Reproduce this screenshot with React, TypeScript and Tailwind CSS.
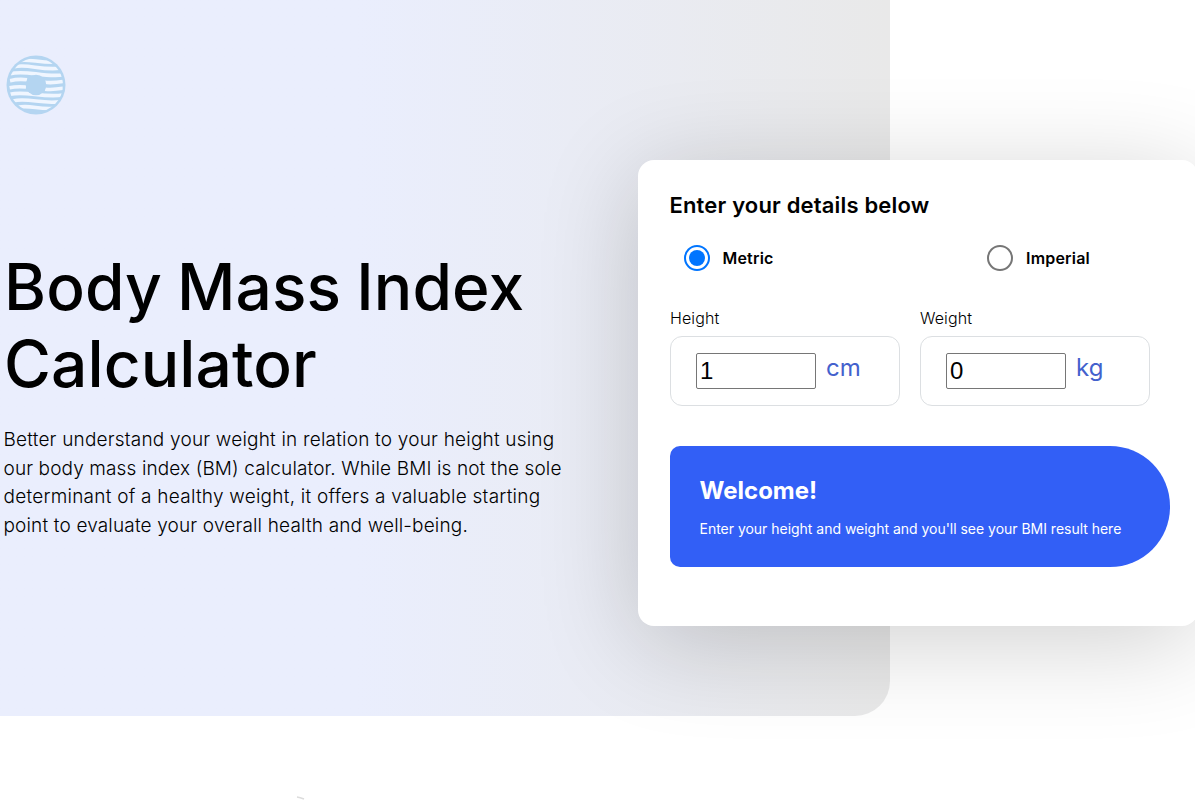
import { useState } from "react";

function Logo() {
  return (
    <svg className="block h-15 w-15" viewBox="0 0 60 60" fill="none">
      <defs>
        <clipPath id="logo-disc">
          <circle cx="30" cy="30" r="27" />
        </clipPath>
      </defs>
      <circle cx="30" cy="30" r="29.5" fill="#b4d5f1" />
      <g stroke="#f0f6ff" strokeWidth="3.6" clipPath="url(#logo-disc)">
        <path d="M14 5.500C24 4 34 8 50 7.200" />
        <path d="M8 11.800C22 8.500 34 15.500 54 13.300" />
        <path d="M4 18.800C20 14.500 36 22.500 57 20" />
        <path d="M4 25.800C10 24.200 15 24 21 24.800M38 27.300C45 28 51 27.500 57 26.500" />
        <path d="M3.500 32.700C9 31.500 14 31.500 20 32M39 34.200C45 34.800 51 34.300 57 33.300" />
        <path d="M4 39.300C20 35.500 36 43 57 40" />
        <path d="M7 45.900C22 42.500 36 49.300 54 46.700" />
        <path d="M12 52.300C24 49.500 33 55 48 53.300" />
      </g>
      <circle cx="30" cy="30" r="10.3" fill="#b4d5f1" />
    </svg>
  );
}

type UnitProps = { label: string; checked: boolean; onSelect: () => void };

function UnitOption({ label, checked, onSelect }: UnitProps) {
  return (
    <label className="flex items-center gap-[13px]">
      <input
        type="radio"
        name="unit"
        checked={checked}
        onChange={onSelect}
        className="m-0 h-[26px] w-[26px] appearance-none rounded-full border-2 border-[#767676] bg-white bg-clip-content p-[3px] checked:border-[#0075ff] checked:bg-[#0075ff]"
      />
      <span className="text-[16px] leading-6 font-semibold tracking-[0.2px]">{label}</span>
    </label>
  );
}

type MeasureProps = { label: string; unit: string; initial: string };

function Measure({ label, unit, initial }: MeasureProps) {
  const [value, setValue] = useState(initial);
  return (
    <div className="w-[230px]">
      <div className="h-[30px] text-[16px] leading-6 font-light tracking-[0.1px]">{label}</div>
      <div className="flex h-[70px] items-center rounded-xl border border-[#dcdfe2] pl-[25px]">
        <input
          value={value}
          onChange={(e) => setValue(e.target.value)}
          className="h-9 w-[120px] rounded-[2px] border border-[#767676] bg-white px-[3px] font-['Liberation_Sans',sans-serif] text-[24px] leading-7"
        />
        <span className="ml-[10px] pb-[6px] text-[24px] leading-7 text-[#4361cd]">
          {unit}
        </span>
      </div>
    </div>
  );
}

export default function App() {
  const [unit, setUnit] = useState("metric");
  return (
    <div className="h-[800px] overflow-hidden bg-white font-['Inter',sans-serif] text-black">
      <main className="relative h-full w-[1195px] overflow-hidden">
        <section className="h-[716px] w-[890px] rounded-br-[35px] bg-linear-to-r from-[#eaeefd] from-40% to-[#e9e9e9] pt-[55px]">
          <div className="pl-[6px]">
            <Logo />
          </div>
          <h1 className="mt-[133px] pl-1 text-[64px] leading-[77px] font-medium tracking-[0.1px] [word-spacing:-2px]">
            Body Mass Index
            <br />
            Calculator
          </h1>
          <p className="mt-6 w-[580px] pl-[3.500px] text-[19px] leading-[28.7px] font-light whitespace-nowrap">
            <span className="block tracking-[0.2px]">
              Better understand your weight in relation to your height using
            </span>
            <span className="block tracking-[0.12px]">
              our body mass index (BM) calculator. While BMI is not the sole
            </span>
            <span className="block tracking-[0.24px]">
              determinant of a healthy weight, it offers a valuable starting
            </span>
            <span className="block tracking-[0.16px]">
              point to evaluate your overall health and well-being.
            </span>
          </p>
        </section>

        <section className="absolute top-40 left-[638px] h-[466px] w-[560px] rounded-2xl bg-white pt-[31px] pl-8 shadow-[0_16px_100px_rgba(0,0,0,0.19)]">
          <h2 className="-ml-[0.500px] text-[22px] leading-7 font-semibold tracking-[0.17px]">
            Enter your details below
          </h2>
          <div className="mt-[26px] flex pl-[13.500px]">
            <div className="w-[303.500px]">
              <UnitOption label="Metric" checked={unit === "metric"} onSelect={() => setUnit("metric")} />
            </div>
            <UnitOption label="Imperial" checked={unit === "imperial"} onSelect={() => setUnit("imperial")} />
          </div>
          <div className="mt-[35px] flex gap-5">
            <Measure label="Height" unit="cm" initial="1" />
            <Measure label="Weight" unit="kg" initial="0" />
          </div>
          <div className="mt-10 h-[121px] w-[500px] rounded-l-[10px] rounded-r-[60px] bg-[#325ff6] pt-[29px] pl-[29.500px] text-white">
            <h3 className="text-[24px] leading-8 font-bold">Welcome!</h3>
            <p className="mt-[11px] text-[14px] leading-[22px] tracking-[-0.02px]">
              Enter your height and weight and you'll see your BMI result here
            </p>
          </div>
        </section>

        <svg className="absolute top-[795px] left-[296px] h-[5px] w-[12px]" viewBox="0 0 12 5" fill="none">
          <path d="M1 2Q4 2.300 8 4" stroke="#dcdcdc" strokeWidth="1.500" />
        </svg>
      </main>
    </div>
  );
}
